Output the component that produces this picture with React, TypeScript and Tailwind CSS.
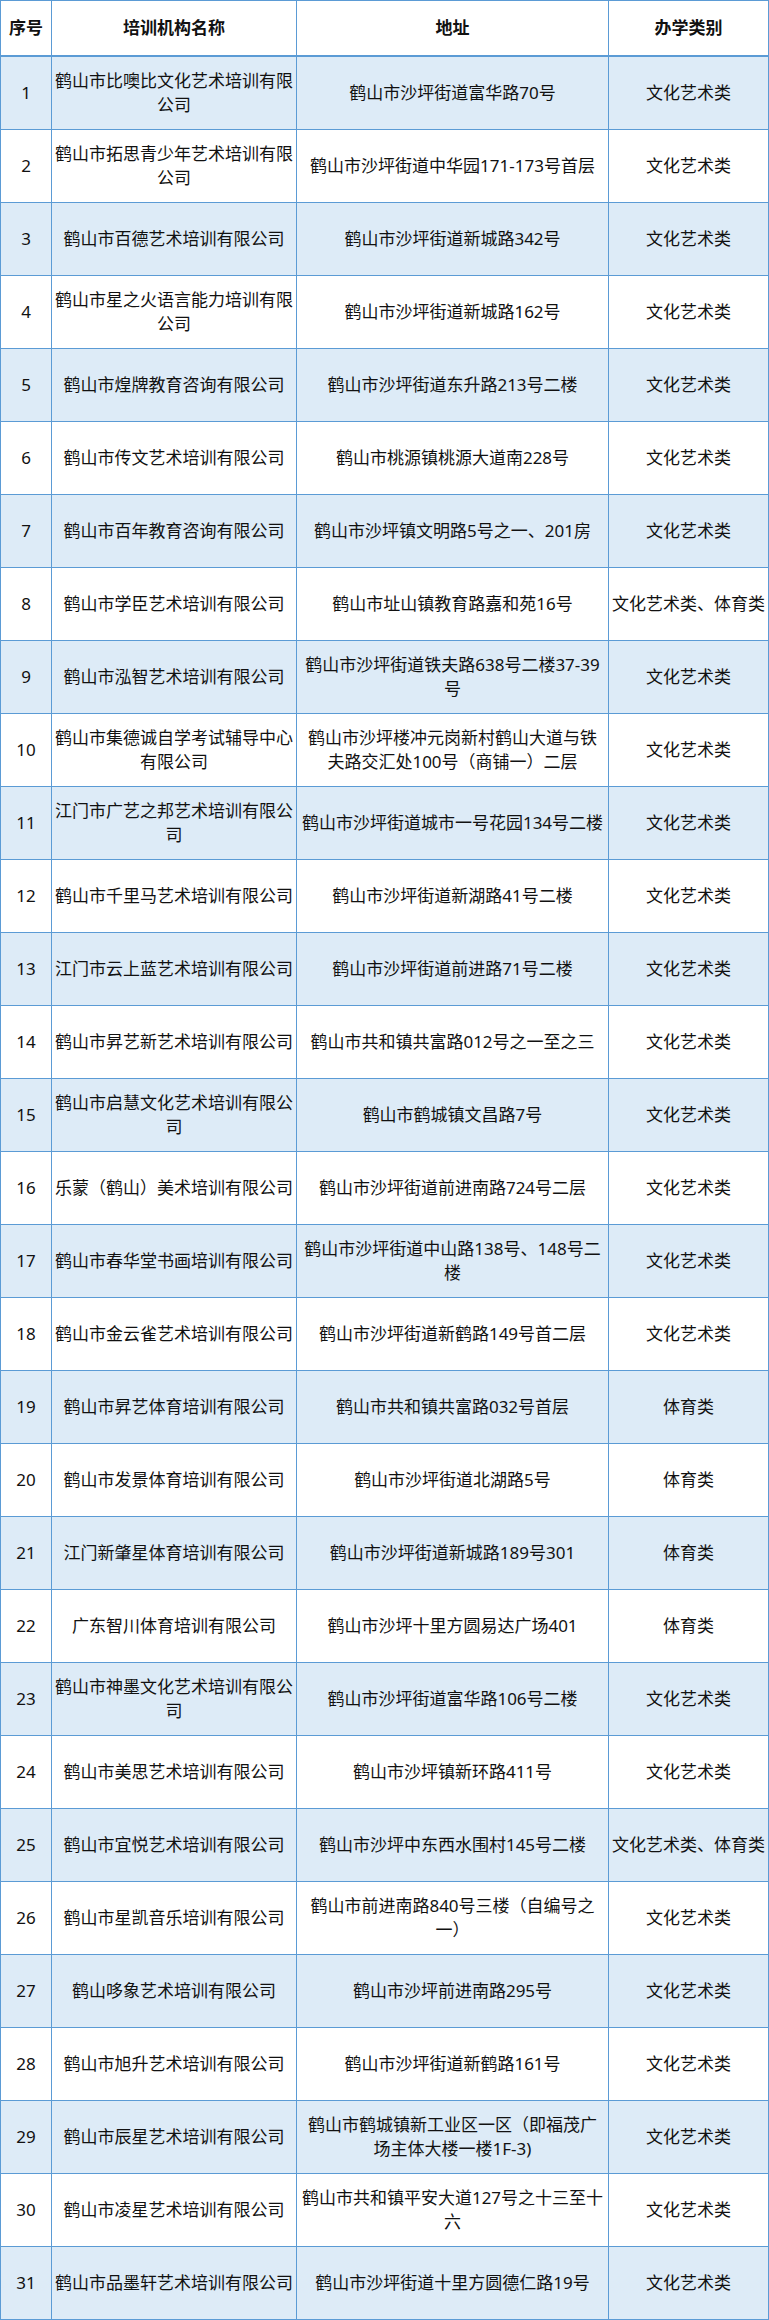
type Row = [string, string, string];

const rows: Row[] = [
  ["鹤山市比噢比文化艺术培训有限\n公司", "鹤山市沙坪街道富华路70号", "文化艺术类"],
  ["鹤山市拓思青少年艺术培训有限\n公司", "鹤山市沙坪街道中华园171-173号首层", "文化艺术类"],
  ["鹤山市百德艺术培训有限公司", "鹤山市沙坪街道新城路342号", "文化艺术类"],
  ["鹤山市星之火语言能力培训有限\n公司", "鹤山市沙坪街道新城路162号", "文化艺术类"],
  ["鹤山市煌牌教育咨询有限公司", "鹤山市沙坪街道东升路213号二楼", "文化艺术类"],
  ["鹤山市传文艺术培训有限公司", "鹤山市桃源镇桃源大道南228号", "文化艺术类"],
  ["鹤山市百年教育咨询有限公司", "鹤山市沙坪镇文明路5号之一、201房", "文化艺术类"],
  ["鹤山市学臣艺术培训有限公司", "鹤山市址山镇教育路嘉和苑16号", "文化艺术类、体育类"],
  ["鹤山市泓智艺术培训有限公司", "鹤山市沙坪街道铁夫路638号二楼37-39\n号", "文化艺术类"],
  ["鹤山市集德诚自学考试辅导中心\n有限公司", "鹤山市沙坪楼冲元岗新村鹤山大道与铁\n夫路交汇处100号（商铺一）二层", "文化艺术类"],
  ["江门市广艺之邦艺术培训有限公\n司", "鹤山市沙坪街道城市一号花园134号二楼", "文化艺术类"],
  ["鹤山市千里马艺术培训有限公司", "鹤山市沙坪街道新湖路41号二楼", "文化艺术类"],
  ["江门市云上蓝艺术培训有限公司", "鹤山市沙坪街道前进路71号二楼", "文化艺术类"],
  ["鹤山市昇艺新艺术培训有限公司", "鹤山市共和镇共富路012号之一至之三", "文化艺术类"],
  ["鹤山市启慧文化艺术培训有限公\n司", "鹤山市鹤城镇文昌路7号", "文化艺术类"],
  ["乐蒙（鹤山）美术培训有限公司", "鹤山市沙坪街道前进南路724号二层", "文化艺术类"],
  ["鹤山市春华堂书画培训有限公司", "鹤山市沙坪街道中山路138号、148号二\n楼", "文化艺术类"],
  ["鹤山市金云雀艺术培训有限公司", "鹤山市沙坪街道新鹤路149号首二层", "文化艺术类"],
  ["鹤山市昇艺体育培训有限公司", "鹤山市共和镇共富路032号首层", "体育类"],
  ["鹤山市发景体育培训有限公司", "鹤山市沙坪街道北湖路5号", "体育类"],
  ["江门新肇星体育培训有限公司", "鹤山市沙坪街道新城路189号301", "体育类"],
  ["广东智川体育培训有限公司", "鹤山市沙坪十里方圆易达广场401", "体育类"],
  ["鹤山市神墨文化艺术培训有限公\n司", "鹤山市沙坪街道富华路106号二楼", "文化艺术类"],
  ["鹤山市美思艺术培训有限公司", "鹤山市沙坪镇新环路411号", "文化艺术类"],
  ["鹤山市宜悦艺术培训有限公司", "鹤山市沙坪中东西水围村145号二楼", "文化艺术类、体育类"],
  ["鹤山市星凯音乐培训有限公司", "鹤山市前进南路840号三楼（自编号之\n一）", "文化艺术类"],
  ["鹤山哆象艺术培训有限公司", "鹤山市沙坪前进南路295号", "文化艺术类"],
  ["鹤山市旭升艺术培训有限公司", "鹤山市沙坪街道新鹤路161号", "文化艺术类"],
  ["鹤山市辰星艺术培训有限公司", "鹤山市鹤城镇新工业区一区（即福茂广\n场主体大楼一楼1F-3)", "文化艺术类"],
  ["鹤山市凌星艺术培训有限公司", "鹤山市共和镇平安大道127号之十三至十\n六", "文化艺术类"],
  ["鹤山市品墨轩艺术培训有限公司", "鹤山市沙坪街道十里方圆德仁路19号", "文化艺术类"],
];

const cell =
  "flex items-center justify-center text-center whitespace-pre px-[2px] border-r border-[#5b9bd5]";

export default function App() {
  return (
    <div
      className="w-[769px] bg-white text-[17px] leading-[24px] text-[#111]"
      style={{ fontFamily: '"Noto Sans", "Noto Sans CJK SC", sans-serif' }}
    >
      <div className="border-t border-l border-[#5b9bd5]">
        {/* header */}
        <div className="grid grid-cols-[51px_245px_312px_160px] h-[56px] font-bold">
          <div className={`${cell} border-b-2`}>序号</div>
          <div className={`${cell} border-b-2`}>培训机构名称</div>
          <div className={`${cell} border-b-2`}>地址</div>
          <div className={`${cell} border-b-2`}>办学类别</div>
        </div>

        {rows.map(([name, addr, kind], i) => (
          <div
            key={i}
            className={`grid grid-cols-[51px_245px_312px_160px] h-[73px] ${
              i % 2 === 0 ? "bg-[#ddebf7]" : "bg-white"
            }`}
          >
            <div className={`${cell} border-b`}>{i + 1}</div>
            <div className={`${cell} border-b`}>{name}</div>
            <div className={`${cell} border-b`}>{addr}</div>
            <div className={`${cell} border-b`}>{kind}</div>
          </div>
        ))}
      </div>
    </div>
  );
}
